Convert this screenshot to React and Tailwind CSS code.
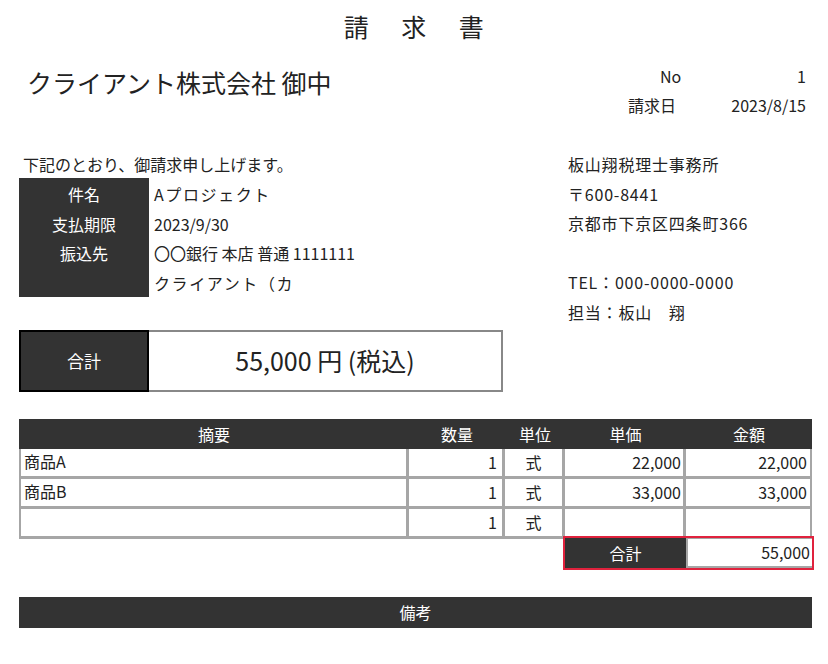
export default function App() {
  const f = { fontFamily: '"Noto Sans CJK JP", "Noto Sans", sans-serif' };
  const cell = 'border-[#a6a6a6] h-[27px] flex items-center text-[16px]';
  const rows = [
    ['商品A', '1', '式', '22,000', '22,000'],
    ['商品B', '1', '式', '33,000', '33,000'],
    ['', '1', '式', '', ''],
  ];
  return (
    <div style={f} className="w-[828px] h-[664px] bg-white text-[#222] relative overflow-hidden">
      <div className="text-center text-[25px] tracking-[1.3em] pt-[6px] pl-[32px] leading-[40px]">請求書</div>
      <div className="flex justify-between pl-[27px] pr-[22px] h-[76px]">
        <div className="text-[25px] leading-[34px] mt-[19px]">クライアント株式会社 御中</div>
        <div className="text-[16px] mt-[16px]">
          <div className="flex leading-[28px]"><span className="w-[32px]"></span><span className="w-[70px]">No</span><span className="w-[76px] text-right">1</span></div>
          <div className="flex leading-[30px]"><span className="w-[90px]">請求日</span><span className="w-[88px] text-right">2023/8/15</span></div>
        </div>
      </div>
      <div className="flex mt-[30px] pl-[19px] text-[16px]">
        <div className="w-[549px]">
          <div className="pl-[4px] leading-[25px] h-[26px]">下記のとおり、御請求申し上げます。</div>
          <div className="flex">
            <div className="w-[130px] h-[119px] bg-[#333] text-white text-center pt-[1px]">
              <div className="leading-[30px]">件名</div>
              <div className="leading-[30px]">支払期限</div>
              <div className="leading-[29px]">振込先</div>
            </div>
            <div className="pl-[5px] pt-[1px]">
              <div className="leading-[30px] tracking-[0.1em]">Aプロジェクト</div>
              <div className="leading-[30px]">2023/9/30</div>
              <div className="leading-[29px]">〇〇銀行 本店 普通 1111111</div>
              <div className="leading-[30px] tracking-[0.1em]">クライアント（カ</div>
            </div>
          </div>
        </div>
        <div className="leading-[29.6px] tracking-[0.05em] -mt-[2px]">
          <div>板山翔税理士事務所</div>
          <div>〒600-8441</div>
          <div>京都市下京区四条町366</div>
          <div>&nbsp;</div>
          <div>TEL：000-0000-0000</div>
          <div>担当：板山　翔</div>
        </div>
      </div>
      <div className="flex mt-[2px] ml-[19px] h-[62px]">
        <div className="w-[130px] bg-[#333] border-2 border-black text-white flex items-center justify-center text-[17px]">合計</div>
        <div className="w-[354px] border-2 border-l-0 border-[#888] flex items-center justify-center text-[25px]">55,000 円 (税込)</div>
      </div>
      <div className="ml-[19px] mt-[27px] w-[793px] text-[16px]">
        <div className="flex h-[30px] bg-[#333] text-white items-center text-center">
          <div className="w-[390px]">摘要</div>
          <div className="w-[96px]">数量</div>
          <div className="w-[60px]">単位</div>
          <div className="w-[121px]">単価</div>
          <div className="w-[126px]">金額</div>
        </div>
        <div className="border-l-2 border-[#a6a6a6]">
          {rows.map((r, i) => (
            <div key={i} className="flex border-b-[3px] border-[#a6a6a6]">
              <div className={`${cell} w-[388px] border-r-[3px] pl-[3px] items-start`}>{r[0]}</div>
              <div className={`${cell} w-[96px] border-r-[3px] justify-end pr-[5px]`}>{r[1]}</div>
              <div className={`${cell} w-[60px] border-r-[3px] justify-center`}>{r[2]}</div>
              <div className={`${cell} w-[121px] border-r-[3px] justify-end pr-[2px]`}>{r[3]}</div>
              <div className={`${cell} w-[126px] border-r-2 justify-end pr-[3px]`}>{r[4]}</div>
            </div>
          ))}
        </div>
        <div className="flex justify-end">
          <div className="flex border-2 border-[#e0223d] -mr-[2px] -mt-[3px] h-[34px]">
            <div className="w-[121px] bg-[#333] text-white flex items-center justify-center">合計</div>
            <div className="w-[126px] border-l-2 border-b-2 border-[#a6a6a6] flex items-center justify-end pr-[2px]">55,000</div>
          </div>
        </div>
        <div className="mt-[27px] h-[31px] bg-[#333] text-white flex items-center justify-center">備考</div>
      </div>
    </div>
  );
}
